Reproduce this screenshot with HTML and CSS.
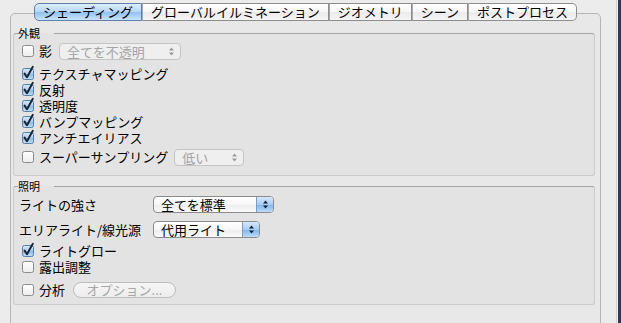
FILE: index.html
```html
<!DOCTYPE html>
<html lang="ja">
<head>
<meta charset="utf-8">
<link rel="stylesheet" href="styles.css">
</head>
<body>
<div class="window">
  <div class="main">
    <div class="tabview">
      <div class="tabs">
        <div class="tab active">シェーディング</div>
        <div class="tab">グローバルイルミネーション</div>
        <div class="tab">ジオメトリ</div>
        <div class="tab">シーン</div>
        <div class="tab">ポストプロセス</div>
      </div>
      <div class="pane">
        <fieldset class="group g1">
          <legend>外観</legend>
          <div class="row tall">
            <svg class="cb" viewBox="0 0 12 12"><use href="#cb-off"/></svg>
            <span class="lbl">影</span>
            <div class="popup disabled p-opaque"><span class="val">全てを不透明</span><span class="step"><svg viewBox="0 0 7 11" class="arr"><path d="M1 4.5 L3.5 1.5 L6 4.5Z M1 6.5 L3.5 9.5 L6 6.5Z"/></svg></span></div>
          </div>
          <div class="checks">
            <div class="row"><svg class="cb" viewBox="0 0 12 12"><use href="#cb-on"/></svg><span class="lbl">テクスチャマッピング</span></div>
            <div class="row"><svg class="cb" viewBox="0 0 12 12"><use href="#cb-on"/></svg><span class="lbl">反射</span></div>
            <div class="row"><svg class="cb" viewBox="0 0 12 12"><use href="#cb-on"/></svg><span class="lbl">透明度</span></div>
            <div class="row"><svg class="cb" viewBox="0 0 12 12"><use href="#cb-on"/></svg><span class="lbl">バンプマッピング</span></div>
            <div class="row"><svg class="cb" viewBox="0 0 12 12"><use href="#cb-on"/></svg><span class="lbl">アンチエイリアス</span></div>
          </div>
          <div class="row tall ss">
            <svg class="cb" viewBox="0 0 12 12"><use href="#cb-off"/></svg>
            <span class="lbl">スーパーサンプリング</span>
            <div class="popup disabled p-low"><span class="val">低い</span><span class="step"><svg viewBox="0 0 7 11" class="arr"><path d="M1 4.5 L3.5 1.5 L6 4.5Z M1 6.5 L3.5 9.5 L6 6.5Z"/></svg></span></div>
          </div>
        </fieldset>

        <fieldset class="group g2">
          <legend>照明</legend>
          <div class="form">
            <span class="flabel">ライトの強さ</span>
            <div class="popup p-std"><span class="val">全てを標準</span><span class="step"><svg viewBox="0 0 7 11" class="arr"><path d="M1 4.5 L3.5 1.5 L6 4.5Z M1 6.5 L3.5 9.5 L6 6.5Z"/></svg></span></div>
            <span class="flabel">エリアライト/線光源</span>
            <div class="popup p-sub"><span class="val">代用ライト</span><span class="step"><svg viewBox="0 0 7 11" class="arr"><path d="M1 4.5 L3.5 1.5 L6 4.5Z M1 6.5 L3.5 9.5 L6 6.5Z"/></svg></span></div>
          </div>
          <div class="checks2">
            <div class="row"><svg class="cb" viewBox="0 0 12 12"><use href="#cb-on"/></svg><span class="lbl">ライトグロー</span></div>
            <div class="row"><svg class="cb" viewBox="0 0 12 12"><use href="#cb-off"/></svg><span class="lbl">露出調整</span></div>
          </div>
          <div class="row tall an">
            <svg class="cb" viewBox="0 0 12 12"><use href="#cb-off"/></svg>
            <span class="lbl">分析</span>
            <div class="btn">オプション...</div>
          </div>
        </fieldset>
      </div>
    </div>
  </div>
  <div class="edge"></div>
</div>

<svg class="defs" width="0" height="0">
  <defs>
    <linearGradient id="gOff" x1="0" y1="0" x2="0" y2="1">
      <stop offset="0" stop-color="#ffffff"/>
      <stop offset="1" stop-color="#ececec"/>
    </linearGradient>
    <linearGradient id="gOn" x1="0" y1="0" x2="0" y2="1">
      <stop offset="0" stop-color="#d8e9fb"/>
      <stop offset="0.5" stop-color="#a9cdf3"/>
      <stop offset="0.55" stop-color="#8dbcee"/>
      <stop offset="1" stop-color="#c3e0fc"/>
    </linearGradient>
    <g id="cb-off">
      <rect x="0.5" y="0.5" width="11" height="11" rx="2" fill="url(#gOff)" stroke="#8b8b8b"/>
    </g>
    <g id="cb-on">
      <rect x="0.5" y="0.5" width="11" height="11" rx="2" fill="url(#gOn)" stroke="#5a7ea8"/>
      <path d="M2.6 5.6 L5 9.2 L10.8 -1.2" fill="none" stroke="#1b2230" stroke-width="1.9" stroke-linecap="round" stroke-linejoin="round"/>
    </g>
  </defs>
</svg>
</body>
</html>
```

FILE: styles.css
```css
* { box-sizing: border-box; }

html, body {
  margin: 0;
  padding: 0;
}

body {
  background: #ececec;
  font-family: "Noto Sans CJK JP", "Noto Sans", sans-serif;
  font-size: 13px;
  color: #000;
  overflow: hidden;
}

.window {
  display: flex;
  height: 323px;
  overflow: hidden;
}

.main {
  width: 616px;
  flex: none;
  padding-left: 10px;
  padding-right: 15px;
}

.edge {
  flex: 1;
  background: linear-gradient(to right, #d2d2d2 0 1px, #f3f3f3 1px 2px, #34374f 2px);
}

.tabview {
  margin-top: 13px;
  height: 340px;
  border: 1px solid #b6b6b6;
  border-radius: 5px;
  background: #e8e8e8;
}

.tabs {
  display: flex;
  justify-content: center;
  margin-top: -11px;
}

.tab {
  height: 18px;
  padding: 0 8px;
  border: 1px solid #8d8d8d;
  border-left: 1px solid #a8a8a8;
  background: linear-gradient(#ffffff, #f6f6f6 50%, #ebebeb 52%, #f5f5f5);
  line-height: 16px;
  font-size: 13px;
  white-space: nowrap;
}

.tab:first-child {
  border-left-color: #8d8d8d;
  border-radius: 5px 0 0 5px;
}

.tab:last-child {
  border-radius: 0 5px 5px 0;
}

.tab.active {
  background: linear-gradient(#dcedfd, #b5d6f7 50%, #92c1f1 53%, #c9e4fe);
  border-color: #5d80ad;
}

.pane {
  padding: 0 5px 0 2px;
}

.group {
  margin: 5px 0 0;
  padding: 2px 8px 9px 8px;
  border: 1px solid #cbcbcb;
  border-top-color: #a6a6a6;
  border-radius: 3px;
  background: #e3e3e3;
  min-width: 0;
}

.g2 {
  margin-top: 3px;
  padding-top: 3px;
  padding-bottom: 5px;
}

legend {
  font-size: 11px;
  line-height: 14px;
  padding: 0 14px 0 0;
  margin-left: -4px;
}

.row {
  display: flex;
  align-items: center;
  height: 16px;
}

.row.tall {
  height: 18px;
}

.checks {
  margin-top: 6px;
}

.ss {
  margin-top: 2px;
}

.checks2 {
  margin-top: 5px;
}

.an {
  margin-top: 6px;
}

.cb {
  width: 12px;
  height: 12px;
  flex: none;
  margin-right: 5px;
  overflow: visible;
}

.lbl {
  line-height: 16px;
  white-space: nowrap;
}

.form {
  display: grid;
  grid-template-columns: 134px auto;
  row-gap: 8px;
  align-items: center;
  justify-items: start;
  margin-left: -3px;
}

.flabel {
  line-height: 16px;
  white-space: nowrap;
}

.popup {
  display: flex;
  align-items: stretch;
  height: 17px;
  border: 1px solid #8c8c8c;
  border-radius: 4px;
  background: linear-gradient(#ffffff, #f7f7f7 50%, #ededed 52%, #fafafa);
  font-size: 13px;
  line-height: 15px;
  overflow: hidden;
  flex: none;
}

.popup .val {
  flex: 1;
  padding-left: 7px;
  white-space: nowrap;
}

.popup .step {
  width: 17px;
  flex: none;
  display: flex;
  align-items: center;
  justify-content: center;
  border-left: 1px solid #7d9cc4;
  background: linear-gradient(#d6e8fb, #a7cbf2 50%, #82b5ec 53%, #bcdcfb);
}

.arr {
  width: 7px;
  height: 11px;
  fill: #10203a;
}

.popup.disabled {
  border-color: #c4c4c4;
  background: #efefef;
  color: #a4a4a4;
}

.popup.disabled .step {
  border-left: none;
  background: none;
}

.popup.disabled .arr {
  fill: #9a9a9a;
}

.p-opaque {
  width: 122px;
  margin-left: 7px;
}

.p-low {
  width: 70px;
  margin-left: 6px;
}

.p-std {
  width: 121px;
}

.p-sub {
  width: 107px;
}

.btn {
  width: 103px;
  height: 16px;
  margin-left: 8px;
  border: 1px solid #bdbdbd;
  border-radius: 8px;
  background: linear-gradient(#f6f6f6, #ededed);
  color: #a6a6a6;
  text-align: center;
  line-height: 14px;
  white-space: nowrap;
}

.defs {
  position: absolute;
  width: 0;
  height: 0;
}
```
